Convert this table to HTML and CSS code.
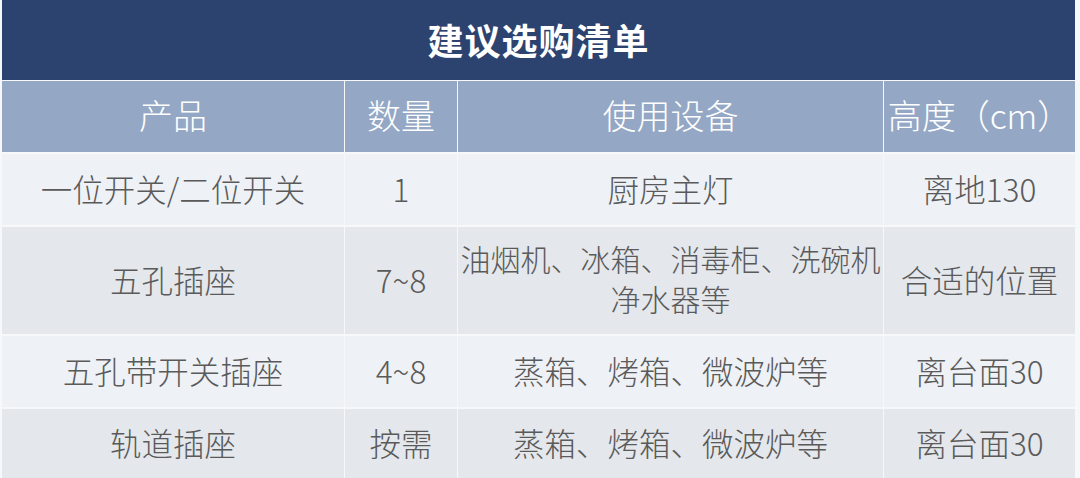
FILE: index.html
```html
<!DOCTYPE html>
<html lang="zh-CN">
<head>
<meta charset="utf-8">
<link rel="stylesheet" href="styles.css">
</head>
<body>
<div class="sheet">
  <div class="title">建议选购清单</div>
  <div class="grid">
    <div class="cell head">产品</div>
    <div class="cell head">数量</div>
    <div class="cell head">使用设备</div>
    <div class="cell head">高度（cm）</div>

    <div class="cell odd">一位开关/二位开关</div>
    <div class="cell odd">1</div>
    <div class="cell odd">厨房主灯</div>
    <div class="cell odd">离地130</div>

    <div class="cell even">五孔插座</div>
    <div class="cell even">7~8</div>
    <div class="cell even multi">油烟机、冰箱、消毒柜、洗碗机<br>净水器等</div>
    <div class="cell even">合适的位置</div>

    <div class="cell odd">五孔带开关插座</div>
    <div class="cell odd">4~8</div>
    <div class="cell odd">蒸箱、烤箱、微波炉等</div>
    <div class="cell odd">离台面30</div>

    <div class="cell even">轨道插座</div>
    <div class="cell even">按需</div>
    <div class="cell even">蒸箱、烤箱、微波炉等</div>
    <div class="cell even">离台面30</div>
  </div>
</div>
</body>
</html>
```

FILE: styles.css
```css
html, body {
  margin: 0;
  padding: 0;
  background: #f7f8fa;
}
body {
  width: 1080px;
  height: 478px;
  overflow: hidden;
  font-family: "Noto Sans CJK SC", "Noto Sans", sans-serif;
}
.sheet {
  margin-left: 2px;
  width: 1073px;
  display: flex;
  flex-direction: column;
  gap: 1px;
}
.title {
  height: 80px;
  background: #2c4370;
  color: #ffffff;
  font-size: 36px;
  font-weight: 700;
  display: flex;
  align-items: center;
  justify-content: center;
  letter-spacing: 1px;
  padding-bottom: 2px;
  box-sizing: border-box;
}
.grid {
  display: grid;
  grid-template-columns: 342px 112px 425px 191px;
  grid-template-rows: 71px 71px 107px 71px 69px;
  column-gap: 1px;
  row-gap: 2px;
}
.cell {
  display: flex;
  align-items: center;
  justify-content: center;
  text-align: center;
  font-size: 31.5px;
  font-weight: 300;
  color: #5a5a5a;
  line-height: 40px;
  padding-bottom: 4px;
  box-sizing: border-box;
}
.head {
  background: #94a8c5;
  color: #ffffff;
  font-size: 34px;
}
.odd {
  background: #eef1f5;
}
.even {
  background: #e4e7eb;
}
.multi {
  font-size: 30px;
  padding-bottom: 6px;
}
```
